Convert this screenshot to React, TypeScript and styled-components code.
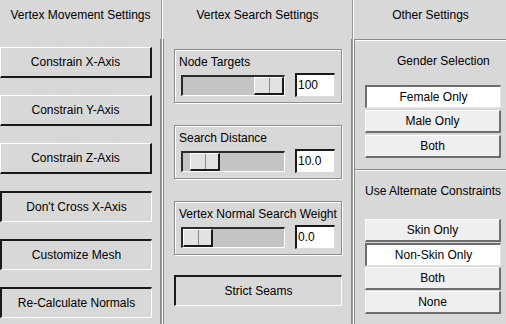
import React from "react";
import styled, { createGlobalStyle } from "styled-components";

const GlobalStyle = createGlobalStyle`
  html, body {
    margin: 0;
    padding: 0;
    background: #d8d8d8;
  }
  body {
    font-family: "Liberation Sans", Arial, sans-serif;
    font-size: 12px;
    color: #000;
  }
`;

const Page = styled.div`
  display: flex;
  width: 506px;
  height: 324px;
  overflow: hidden;
  background: #d8d8d8;
`;

const Column = styled.div<{ $w: number; $first?: boolean }>`
  display: flex;
  flex-direction: column;
  flex: 0 0 ${(p) => p.$w}px;
  box-sizing: border-box;
  border-left: ${(p) => (p.$first ? "none" : "1px solid #ffffff")};
  border-right: 1px solid #9a9a9a;
`;

const Header = styled.div`
  flex-shrink: 0;
  height: 39px;
  box-sizing: border-box;
  padding-top: 8px;
  line-height: 14px;
  text-align: center;
  white-space: nowrap;
`;

const Body = styled.div`
  flex: 1;
  display: flex;
  flex-direction: column;
  box-sizing: border-box;
  border-right: 1px solid #8a8a8a;
  & > * {
    flex-shrink: 0;
  }
`;

const MoveList = styled(Body)`
  padding-top: 8px;
  gap: 17px;
`;

const SearchList = styled(Body)`
  padding: 10px 0 0 10px;
  border-left: 1px solid #8a8a8a;
`;

const BevelButton = styled.div<{ $sunken?: boolean }>`
  display: flex;
  align-items: center;
  justify-content: center;
  box-sizing: border-box;
  background: #d8d8d8;
  border-style: solid;
  border-color: ${(p) =>
    p.$sunken
      ? "#1a1a1a #ffffff #ffffff #1a1a1a"
      : "#ffffff #1a1a1a #1a1a1a #ffffff"};
  border-width: ${(p) => (p.$sunken ? "2px 1px 1px 2px" : "1px 2px 2px 1px")};
  white-space: nowrap;
`;

const MoveButton = styled(BevelButton)`
  width: 152px;
  height: 31px;
`;

const SeamButton = styled(BevelButton)`
  width: 168px;
  height: 31px;
  margin-top: 20px;
`;

const Group = styled.div`
  width: 168px;
  height: 54px;
  box-sizing: border-box;
  border: 1px solid #8c8c8c;
  box-shadow: inset 1px 1px 0 #ffffff, 1px 1px 0 #ffffff;
  padding: 5px 0 0 4px;
  & + & {
    margin-top: 22px;
  }
`;

const GroupLabel = styled.div`
  line-height: 14px;
  white-space: nowrap;
`;

const SliderRow = styled.div`
  display: flex;
  align-items: center;
  gap: 10px;
  margin-top: 4px;
  padding-left: 2px;
`;

const Track = styled.div`
  position: relative;
  width: 104px;
  height: 21px;
  box-sizing: border-box;
  background: #c4c4c4;
  border-style: solid;
  border-width: 2px 1px 1px 2px;
  border-color: #2a2a2a #ffffff #ffffff #2a2a2a;
`;

const Thumb = styled.div<{ $pos: number }>`
  position: absolute;
  top: 0;
  left: ${(p) => Math.round(p.$pos * 71)}px;
  width: 30px;
  height: 18px;
  box-sizing: border-box;
  background: #e2e2e2;
  border-style: solid;
  border-width: 1px 2px 2px 1px;
  border-color: #ffffff #1a1a1a #1a1a1a #ffffff;
  &::after {
    content: "";
    position: absolute;
    left: 14px;
    top: 0;
    bottom: 0;
    width: 1px;
    background: #8a8a8a;
  }
`;

const Spinner = styled.div`
  width: 40px;
  height: 24px;
  box-sizing: border-box;
  background: #ffffff;
  border-style: solid;
  border-width: 2px 1px 1px 2px;
  border-color: #1a1a1a #d8d8d8 #d8d8d8 #1a1a1a;
  padding-left: 1px;
  line-height: 20px;
`;

const Section = styled.div<{ $grow?: boolean }>`
  display: flex;
  flex-direction: column;
  box-sizing: border-box;
  border-top: 1px solid #8a8a8a;
  border-left: 1px solid #8a8a8a;
  box-shadow: inset 0 1px 0 #ffffff;
  padding: 0 6px 0 10px;
  ${(p) => (p.$grow ? "flex: 1;" : "height: 130px; flex-shrink: 0;")}
`;

const SectionTitle = styled.div<{ $indent?: number; $h: number }>`
  height: ${(p) => p.$h}px;
  box-sizing: border-box;
  padding-top: 14px;
  line-height: 14px;
  white-space: nowrap;
  text-align: ${(p) => (p.$indent ? "left" : "center")};
  padding-left: ${(p) => p.$indent ?? 0}px;
  width: 136px;
`;

const Options = styled.div<{ $gap: number }>`
  display: flex;
  flex-direction: column;
  gap: ${(p) => p.$gap}px;
`;

const Option = styled.div<{ $on?: boolean }>`
  width: 136px;
  height: 23px;
  box-sizing: border-box;
  display: flex;
  align-items: center;
  justify-content: center;
  background: ${(p) => (p.$on ? "#ffffff" : "#efefef")};
  border-style: solid;
  border-width: ${(p) => (p.$on ? "2px 1px 1px 2px" : "1px 2px 2px 1px")};
  border-color: ${(p) =>
    p.$on
      ? "#6e6e6e #e6e6e6 #e6e6e6 #6e6e6e"
      : "#ffffff #6e6e6e #6e6e6e #ffffff"};
  white-space: nowrap;
`;

const moveButtons = [
  { label: "Constrain X-Axis" },
  { label: "Constrain Y-Axis" },
  { label: "Constrain Z-Axis" },
  { label: "Don't Cross X-Axis", sunken: true },
  { label: "Customize Mesh", sunken: true },
  { label: "Re-Calculate Normals", sunken: true },
];

const sliders = [
  { label: "Node Targets", value: "100", pos: 1 },
  { label: "Search Distance", value: "10.0", pos: 0.1 },
  { label: "Vertex Normal Search Weight", value: "0.0", pos: 0 },
];

export default function App() {
  return (
    <>
      <GlobalStyle />
      <Page>
        <Column $w={162} $first>
          <Header>Vertex Movement Settings</Header>
          <MoveList>
            {moveButtons.map((b) => (
              <MoveButton key={b.label} $sunken={b.sunken}>
                {b.label}
              </MoveButton>
            ))}
          </MoveList>
        </Column>
        <Column $w={191}>
          <Header>Vertex Search Settings</Header>
          <SearchList>
            {sliders.map((s) => (
              <Group key={s.label}>
                <GroupLabel>{s.label}</GroupLabel>
                <SliderRow>
                  <Track>
                    <Thumb $pos={s.pos} />
                  </Track>
                  <Spinner>{s.value}</Spinner>
                </SliderRow>
              </Group>
            ))}
            <SeamButton $sunken>Strict Seams</SeamButton>
          </SearchList>
        </Column>
        <Column $w={153}>
          <Header>Other Settings</Header>
          <Section>
            <SectionTitle $h={45} $indent={32}>
              Gender Selection
            </SectionTitle>
            <Options $gap={2}>
              <Option $on>Female Only</Option>
              <Option>Male Only</Option>
              <Option>Both</Option>
            </Options>
          </Section>
          <Section $grow>
            <SectionTitle $h={49}>Use Alternate Constraints</SectionTitle>
            <Options $gap={1}>
              <Option>Skin Only</Option>
              <Option $on>Non-Skin Only</Option>
              <Option>Both</Option>
              <Option>None</Option>
            </Options>
          </Section>
        </Column>
      </Page>
    </>
  );
}
